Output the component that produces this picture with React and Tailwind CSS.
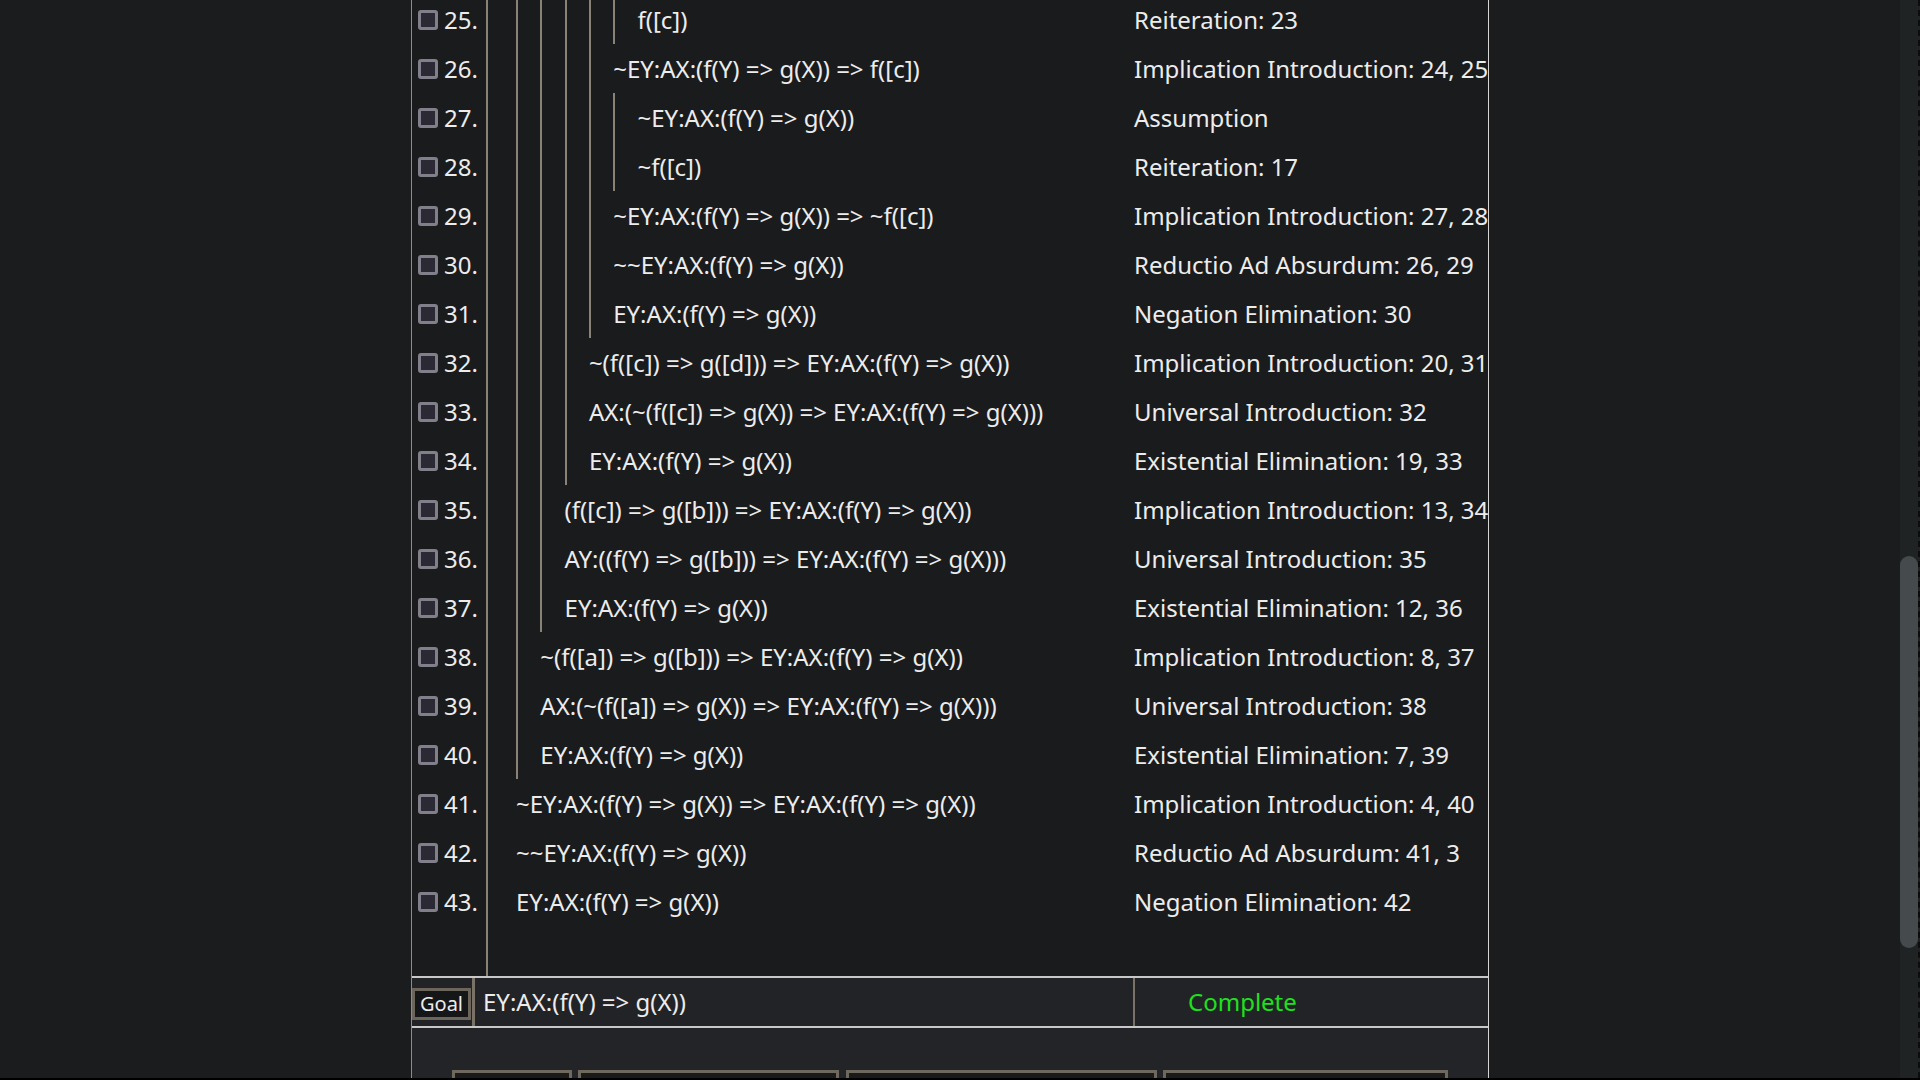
const rows = [
  [25, 'f([c])', 'Reiteration: 23', 5],
  [26, '~EY:AX:(f(Y) => g(X)) => f([c])', 'Implication Introduction: 24, 25', 4],
  [27, '~EY:AX:(f(Y) => g(X))', 'Assumption', 5],
  [28, '~f([c])', 'Reiteration: 17', 5],
  [29, '~EY:AX:(f(Y) => g(X)) => ~f([c])', 'Implication Introduction: 27, 28', 4],
  [30, '~~EY:AX:(f(Y) => g(X))', 'Reductio Ad Absurdum: 26, 29', 4],
  [31, 'EY:AX:(f(Y) => g(X))', 'Negation Elimination: 30', 4],
  [32, '~(f([c]) => g([d])) => EY:AX:(f(Y) => g(X))', 'Implication Introduction: 20, 31', 3],
  [33, 'AX:(~(f([c]) => g(X)) => EY:AX:(f(Y) => g(X)))', 'Universal Introduction: 32', 3],
  [34, 'EY:AX:(f(Y) => g(X))', 'Existential Elimination: 19, 33', 3],
  [35, '(f([c]) => g([b])) => EY:AX:(f(Y) => g(X))', 'Implication Introduction: 13, 34', 2],
  [36, 'AY:((f(Y) => g([b])) => EY:AX:(f(Y) => g(X)))', 'Universal Introduction: 35', 2],
  [37, 'EY:AX:(f(Y) => g(X))', 'Existential Elimination: 12, 36', 2],
  [38, '~(f([a]) => g([b])) => EY:AX:(f(Y) => g(X))', 'Implication Introduction: 8, 37', 1],
  [39, 'AX:(~(f([a]) => g(X)) => EY:AX:(f(Y) => g(X)))', 'Universal Introduction: 38', 1],
  [40, 'EY:AX:(f(Y) => g(X))', 'Existential Elimination: 7, 39', 1],
  [41, '~EY:AX:(f(Y) => g(X)) => EY:AX:(f(Y) => g(X))', 'Implication Introduction: 4, 40', 0],
  [42, '~~EY:AX:(f(Y) => g(X))', 'Reductio Ad Absurdum: 41, 3', 0],
  [43, 'EY:AX:(f(Y) => g(X))', 'Negation Elimination: 42', 0],
]

function ProofRow({ n, formula, rule, depth }) {
  return (
    <div className="flex h-[49px] shrink-0">
      <div className="flex w-[76px] shrink-0 items-center border-r-2 border-[#8a8276] pl-[6px]">
        <span className="h-5 w-5 shrink-0 rounded-[3px] border-[3px] border-[#807f8a] bg-[#2b2a34]" />
        <span className="ml-[6px]">{n}.</span>
      </div>
      <div className="flex w-[646px] shrink-0 pl-[28px]">
        {Array.from({ length: depth }).map((_, i) => (
          <div key={i} className="w-[24.3px] shrink-0 border-l-[2.5px] border-[#8a8276]" />
        ))}
        <span className="self-center whitespace-nowrap">{formula}</span>
      </div>
      <div className="flex items-center whitespace-nowrap">{rule}</div>
    </div>
  )
}

export default function App() {
  return (
    <div
      className="flex h-[1080px] w-[1920px] flex-col overflow-hidden bg-[#1b1c1e] text-[24px] text-[#ececec]"
      style={{ fontFamily: '"Noto Sans", sans-serif' }}
    >
      <div className="flex min-h-0 flex-1">
        <main className="flex flex-1 justify-center overflow-hidden">
          <div className="flex w-[1078px] flex-col border-l border-r border-l-[#8c8c8c] border-r-[#d6d6d6] bg-[#1a1b1d]">
            {/* proof lines */}
            <div className="mt-[-5px] flex h-[981px] shrink-0 flex-col">
              {rows.map(([n, f, r, d]) => (
                <ProofRow key={n} n={n} formula={f} rule={r} depth={d} />
              ))}
              <div className="flex flex-1">
                <div className="w-[76px] border-r-2 border-[#8a8276]" />
              </div>
            </div>

            {/* goal */}
            <div className="flex h-[52px] shrink-0 border-y-2 border-[#c8c8c8] bg-[#222326]">
              <div className="flex w-[63px] shrink-0 items-center border-r-[3px] border-[#7a7266] pt-[4px]">
                <div className="flex h-[32px] w-[59px] items-center justify-center border-[3px] border-[#6b655b] bg-[#151618] text-[20px]">
                  Goal
                </div>
              </div>
              <div className="flex w-[660px] shrink-0 items-center border-r-2 border-[#7a7266] pl-[8px]">
                EY:AX:(f(Y) =&gt; g(X))
              </div>
              <div className="flex items-center pl-[53px] text-[#1fe01f]">Complete</div>
            </div>

            {/* actions */}
            <div className="flex flex-1 justify-center gap-[6.5px] overflow-hidden bg-[#232427] pt-[42px]">
              {[
                ['w-[120px]', 'Add Line'],
                ['w-[261px]', 'Add Subproof Line'],
                ['w-[311px]', 'End Subproof Add Line'],
                ['w-[285px]', 'Check Proof Validity'],
              ].map(([w, label]) => (
                <div
                  key={label}
                  className={`${w} h-[40px] shrink-0 border-[3px] border-[#6e685d] bg-[#1a1a1a] pt-[6px] text-center text-[20px]`}
                >
                  {label}
                </div>
              ))}
            </div>
          </div>
        </main>

        {/* scrollbar */}
        <div className="flex w-[20px] shrink-0">
          <div className="w-[18px] bg-[#202324] pt-[556px]">
            <div className="h-[392px] w-[18px] rounded-full bg-[#454a4d]" />
          </div>
          <div className="w-[2px] border-l-2 border-dashed border-[#0c0c0c] bg-[#202324]" />
        </div>
      </div>
      <div className="h-[2px] shrink-0 bg-black" />
    </div>
  )
}
